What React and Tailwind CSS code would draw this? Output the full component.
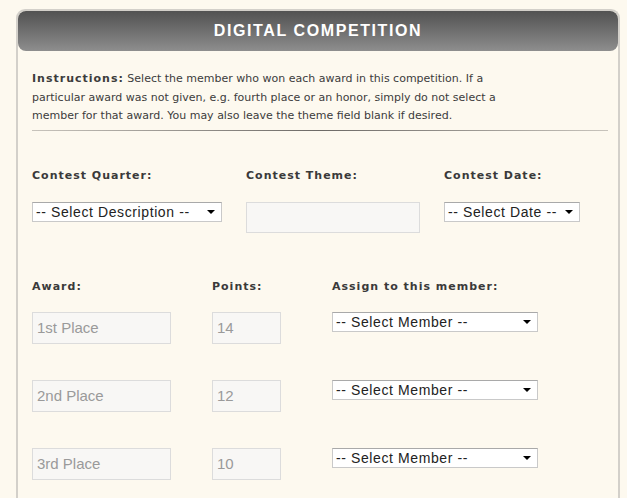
import React from 'react';

const verdana = { fontFamily: '"DejaVu Sans", Verdana, sans-serif' };

const Label = ({ children, className = '' }) => (
    <p className={`text-[11px] font-bold tracking-[1px] text-[#3a3a3a] ${className}`} style={verdana}>{children}</p>
);

// styled like an old windows dropdown
const FakeSelect = ({ label, className = '' }) => (
    <div className={`relative h-[20px] bg-white border border-[#c9c9c9] border-t-[#a9a9a9] flex items-center pl-[3px] ${className}`}>
        <span className="text-[14px] leading-none tracking-[0.6px] text-[#222] font-['Liberation_Sans',Arial,sans-serif] whitespace-nowrap">{label}</span>
        <span className="pointer-events-none absolute right-[6px] top-[7px] w-0 h-0 border-l-[4px] border-r-[4px] border-t-[4px] border-l-transparent border-r-transparent border-t-black" />
    </div>
);

const ReadInput = ({ value, className = '' }) => (
    <input
        readOnly
        value={value}
        className={`h-[32px] bg-[#f8f7f5] border border-[#dcdcdc] px-[4px] text-[15px] text-[#9a9a9a] font-['Liberation_Sans',Arial,sans-serif] outline-none ${className}`}
    />
);

const awards = [
    { name: '1st Place', points: 14 },
    { name: '2nd Place', points: 12 },
    { name: '3rd Place', points: 10 },
];

const App = () => {
    return (
        <div className="w-[627px] h-[498px] overflow-hidden bg-[#fdf9ef] pt-[9px] pl-[16px]">
            <div className="w-[604px] h-[520px] border-2 border-b-0 border-[#d3d0ca] rounded-t-[9px] bg-[#fdf9ef]">
                <div className="h-[40px] rounded-[8px] bg-gradient-to-b from-[#525252] to-[#8e8e8e] flex items-center justify-center">
                    <h1 className="text-white font-bold text-[16px] tracking-[1.6px] font-['Liberation_Sans',Arial,sans-serif]">DIGITAL COMPETITION</h1>
                </div>

                <div className="px-[14px]">
                    <p className="mt-[19px] text-[11px] leading-[18.5px] text-[#3c3c3c]" style={verdana}>
                        <b className="tracking-[1px]">Instructions:</b> Select the member who won each award in this competition. If a<br />
                        particular award was not given, e.g. fourth place or an honor, simply do not select a<br />
                        member for that award. You may also leave the theme field blank if desired.
                    </p>
                    <div className="mt-[4px] h-px w-[576px] bg-gradient-to-r from-[#c8c4bc] via-[#6d6a66] to-[#c8c4bc]" />

                    <div className="flex mt-[37px]">
                        <div className="w-[214px]">
                            <Label>Contest Quarter:</Label>
                            <FakeSelect label="-- Select Description --" className="mt-[18px] w-[190px]" />
                        </div>
                        <div className="w-[198px]">
                            <Label>Contest Theme:</Label>
                            <input className="mt-[18px] w-[174px] h-[31px] bg-[#f8f7f5] border border-[#dcdcdc] outline-none" />
                        </div>
                        <div>
                            <Label>Contest Date:</Label>
                            <FakeSelect label="-- Select Date --" className="mt-[18px] w-[136px]" />
                        </div>
                    </div>

                    <div className="flex mt-[46px]">
                        <Label className="w-[180px]">Award:</Label>
                        <Label className="w-[120px]">Points:</Label>
                        <Label>Assign to this member:</Label>
                    </div>

                    <div className="mt-[16px] flex flex-col gap-[36px]">
                        {awards.map((a) => (
                            <div key={a.name} className="flex items-start">
                                <ReadInput value={a.name} className="w-[139px]" />
                                <ReadInput value={a.points} className="ml-[41px] w-[69px]" />
                                <FakeSelect label="-- Select Member --" className="ml-[51px] w-[206px]" />
                            </div>
                        ))}
                    </div>
                </div>
            </div>
        </div>
    );
};

export default App;
